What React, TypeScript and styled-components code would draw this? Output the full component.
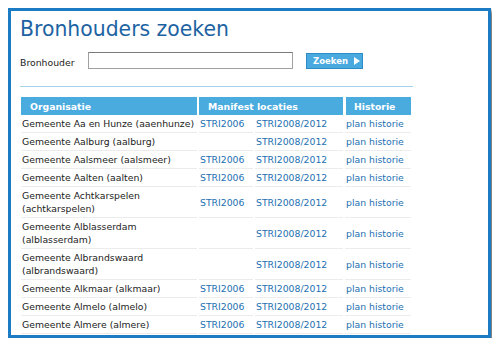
import styled, { createGlobalStyle } from 'styled-components';

const GlobalStyle = createGlobalStyle`
  body {
    margin: 8px;
    background: #fff;
    font-family: 'DejaVu Sans', Verdana, sans-serif;
  }
`;

const Frame = styled.div`
  width: 459px;
  height: 324px;
  border: 3px solid #1b7cc4;
  box-shadow: 3px 3px 4px rgba(0, 0, 0, 0.55);
  background: #fff;
  padding: 0 9px;
  overflow: hidden;
`;

const Title = styled.h1`
  margin: 5px 0 0;
  font-size: 20.4px;
  line-height: 26px;
  font-weight: normal;
  color: #1d63a3;
`;

const SearchRow = styled.div`
  display: flex;
  align-items: center;
  margin-top: 10px;
  height: 17px;
`;

const Label = styled.label`
  width: 68px;
  font-size: 9.3px;
  color: #222;
  padding-top: 4px;
`;

const Input = styled.input`
  width: 205px;
  height: 17px;
  box-sizing: border-box;
  border: 1px solid #a0a0a0;
  border-top-color: #7a7a7a;
  padding: 0 3px;
  margin: 0;
`;

const Button = styled.button`
  margin-left: 13px;
  width: 57px;
  height: 16px;
  box-sizing: border-box;
  background: #4aa9de;
  border: 1px solid #2e8bc6;
  color: #fff;
  font-family: 'DejaVu Sans', Verdana, sans-serif;
  font-weight: bold;
  font-size: 8.5px;
  display: flex;
  align-items: center;
  gap: 6px;
  padding: 0 0 0 6px;
`;

const Arrow = styled.span`
  width: 0;
  height: 0;
  border-top: 4px solid transparent;
  border-bottom: 4px solid transparent;
  border-left: 6px solid #fff;
`;

const Divider = styled.div`
  width: 393px;
  height: 1px;
  background: #a6d3ee;
  margin-top: 17px;
`;

const Table = styled.table`
  margin-top: 10px;
  border-collapse: separate;
  border-spacing: 2px 0;
  table-layout: fixed;
  width: 394px;
  margin-left: -1px;
  font-size: 9.3px;
`;

const HeadCell = styled.th<{ $last?: boolean }>`
  background: #4aabdf;
  color: #fff;
  font-weight: bold;
  text-align: left;
  height: 18px;
  padding: 0 0 0 ${({ $last }) => ($last ? 8 : 9)}px;
  border-left: ${({ $last }) => ($last ? '1px solid #fff' : '0')};
  white-space: nowrap;
`;

const Cell = styled.td<{ $link?: boolean }>`
  padding: 2px 1px;
  line-height: 13px;
  height: 18px;
  box-sizing: border-box;
  color: ${({ $link }) => ($link ? '#2370b2' : '#222')};
  border-bottom: 1px solid #ececec;
  vertical-align: middle;
`;

type Row = { name: string; s2006: boolean };

const rows: Row[] = [
  { name: 'Gemeente Aa en Hunze (aaenhunze)', s2006: true },
  { name: 'Gemeente Aalburg (aalburg)', s2006: false },
  { name: 'Gemeente Aalsmeer (aalsmeer)', s2006: true },
  { name: 'Gemeente Aalten (aalten)', s2006: true },
  { name: 'Gemeente Achtkarspelen (achtkarspelen)', s2006: true },
  { name: 'Gemeente Alblasserdam (alblasserdam)', s2006: false },
  { name: 'Gemeente Albrandswaard (albrandswaard)', s2006: false },
  { name: 'Gemeente Alkmaar (alkmaar)', s2006: true },
  { name: 'Gemeente Almelo (almelo)', s2006: true },
  { name: 'Gemeente Almere (almere)', s2006: true },
];

export default function App() {
  return (
    <>
      <GlobalStyle />
      <Frame>
        <Title>Bronhouders zoeken</Title>
        <SearchRow>
          <Label>Bronhouder</Label>
          <Input />
          <Button>
            Zoeken <Arrow />
          </Button>
        </SearchRow>
        <Divider />
        <Table>
          <colgroup>
            <col style={{ width: 176 }} />
            <col style={{ width: 54 }} />
            <col style={{ width: 88 }} />
            <col style={{ width: 66 }} />
          </colgroup>
          <thead>
            <tr>
              <HeadCell>Organisatie</HeadCell>
              <HeadCell colSpan={2}>Manifest locaties</HeadCell>
              <HeadCell $last>Historie</HeadCell>
            </tr>
          </thead>
          <tbody>
            {rows.map((r) => (
              <tr key={r.name}>
                <Cell>{r.name}</Cell>
                <Cell $link>{r.s2006 ? 'STRI2006' : ''}</Cell>
                <Cell $link>STRI2008/2012</Cell>
                <Cell $link>plan historie</Cell>
              </tr>
            ))}
          </tbody>
        </Table>
      </Frame>
    </>
  );
}
